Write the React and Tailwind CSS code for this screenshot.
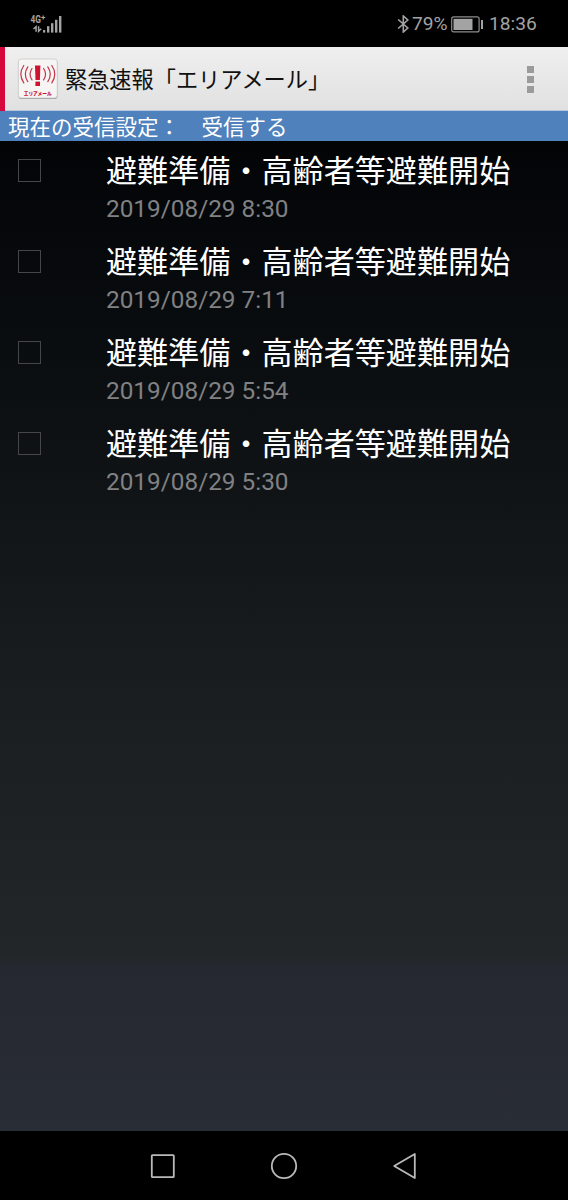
const messages = [
  { id: 1, title: '避難準備・高齢者等避難開始', date: '2019/08/29 8:30' },
  { id: 2, title: '避難準備・高齢者等避難開始', date: '2019/08/29 7:11' },
  { id: 3, title: '避難準備・高齢者等避難開始', date: '2019/08/29 5:54' },
  { id: 4, title: '避難準備・高齢者等避難開始', date: '2019/08/29 5:30' },
]

function SignalIcon() {
  return (
    <svg width="34" height="22" viewBox="0 0 34 22" fill="#a3a3a3">
      <text x="0.5" y="9.6" fontSize="10" fontWeight="700" textLength="10.5" lengthAdjust="spacingAndGlyphs">4G</text>
      <path d="M11.2 4.5h4M13.2 2.5v4" stroke="#a3a3a3" strokeWidth="1.2" />
      <path d="M3.5 16l2.6-2.4v5.2M8.6 13.2v5l2.6-2.4" stroke="#a3a3a3" strokeWidth="1.5" fill="none" />
      <rect x="13" y="17" width="2.2" height="2.6" />
      <rect x="17" y="13.2" width="2.4" height="6.4" />
      <rect x="21" y="10.2" width="2.4" height="9.4" />
      <rect x="25" y="6.8" width="2.4" height="12.8" />
      <rect x="29" y="3" width="2.4" height="16.6" />
    </svg>
  )
}

function StatusBar() {
  return (
    <div className="flex h-[47px] items-center justify-between bg-black pl-[30px] pr-[32px] pt-px text-[19.2px] leading-[24px] text-[#a3a3a3]">
      <SignalIcon />
      <div className="flex items-center">
        <svg width="13" height="18" viewBox="0 0 13 18" fill="none" stroke="#a3a3a3" strokeWidth="1.6">
          <path d="M1.2 4.5l9.6 8.5-4.5 4V1l4.5 4-9.6 8.5" />
        </svg>
        <span className="ml-[2px] w-[36px]">79%</span>
        <svg className="ml-[3px]" width="33" height="17" viewBox="0 0 33 17" fill="#a3a3a3">
          <rect x="0.7" y="0.9" width="27.4" height="15" rx="2" fill="none" stroke="#8c8c8c" strokeWidth="1.2" />
          <rect x="2.5" y="2.8" width="19" height="11.2" />
          <rect x="30" y="4" width="2" height="9" />
        </svg>
        <span className="ml-[5px] w-[47px] whitespace-nowrap">18:36</span>
      </div>
    </div>
  )
}

function AppIcon() {
  return (
    <svg width="42" height="42" viewBox="0 0 42 42">
      <rect x="1.5" y="2" width="39" height="39" rx="3" fill="#9a9a9a" />
      <rect x="1.3" y="1" width="39" height="39" rx="3" fill="#f6f5f4" stroke="#c9c9c9" strokeWidth="0.8" />
      <g fill="#d0112f">
        <path d="M18 7.5h5.4l-.5 14.5h-4.4z" />
        <rect x="18.4" y="23.6" width="4.6" height="4.4" />
      </g>
      <g fill="none" stroke="#c4354a" strokeWidth="1.2" strokeLinecap="round">
        <path d="M15 10.5q-4 5.7 0 11.4M10.8 8.8q-5 7.4 0 14.8M6.8 7.5q-6 8.7 0 17.4" />
        <path d="M26.6 10.5q4 5.7 0 11.4M30.8 8.8q5 7.4 0 14.8M34.8 7.5q6 8.7 0 17.4" />
      </g>
      <text x="6.7" y="36.5" fontSize="5" fontWeight="900" fill="#c8102e" textLength="28" lengthAdjust="spacingAndGlyphs">エリアメール</text>
    </svg>
  )
}

function Header() {
  return (
    <header className="flex h-[64px] bg-[#d6083b] pl-[5px]">
      <div className="flex grow items-center border-b border-[#b7c6dc] bg-linear-to-b from-[#efefef] to-[#e1e1e1] pl-[12px] pr-[34px] pt-px">
        <AppIcon />
        <h1 className="ml-[6px] grow whitespace-nowrap pt-[2px] text-[22.2px] leading-[32px] text-[#111]">緊急速報「エリアメール」</h1>
        <div className="flex flex-col gap-[3px]">
          <span className="size-[7px] bg-[#9b9b9b]" />
          <span className="size-[7px] bg-[#9b9b9b]" />
          <span className="size-[7px] bg-[#9b9b9b]" />
        </div>
      </div>
    </header>
  )
}

function MessageRow({ title, date }) {
  return (
    <li className="flex h-[91px] pl-[18px]">
      <span className="mt-[18px] size-[23px] shrink-0 border border-[#454647]" />
      <div className="ml-[65px] pt-[12px]">
        <div className="whitespace-nowrap text-[31.1px] leading-[38px] text-white">{title}</div>
        <div className="whitespace-nowrap text-[24.35px] leading-[36px] text-[#808183]">{date}</div>
      </div>
    </li>
  )
}

function NavBar() {
  return (
    <nav className="flex h-[69px] items-center justify-center bg-black">
      <svg width="320" height="30" viewBox="0 0 320 30" fill="none" stroke="#b9b9b9" strokeWidth="1.8" strokeLinejoin="round">
        <rect x="27.8" y="4.2" width="22" height="22" rx="0.6" />
        <circle cx="160" cy="15" r="12.2" />
        <path d="M270.2 15 290.8 3v24z" />
      </svg>
    </nav>
  )
}

export default function App() {
  return (
    <div className="flex h-[1200px] w-[568px] flex-col overflow-hidden bg-black font-['Roboto','Noto_Sans_CJK_JP',sans-serif]">
      <StatusBar />
      <Header />
      <div className="h-[30px] whitespace-pre bg-[#4f81bd] pl-[8px] pt-[2px] text-[21.5px] leading-[30px] text-white">現在の受信設定：　受信する</div>
      <ul className="grow bg-[linear-gradient(to_bottom,#020406_0%,#101417_36%,#1a1e20_57%,#232628_82%,#252830_84%,#292d35_100%)]">
        {messages.map(m => (
          <MessageRow key={m.id} title={m.title} date={m.date} />
        ))}
      </ul>
      <NavBar />
    </div>
  )
}
